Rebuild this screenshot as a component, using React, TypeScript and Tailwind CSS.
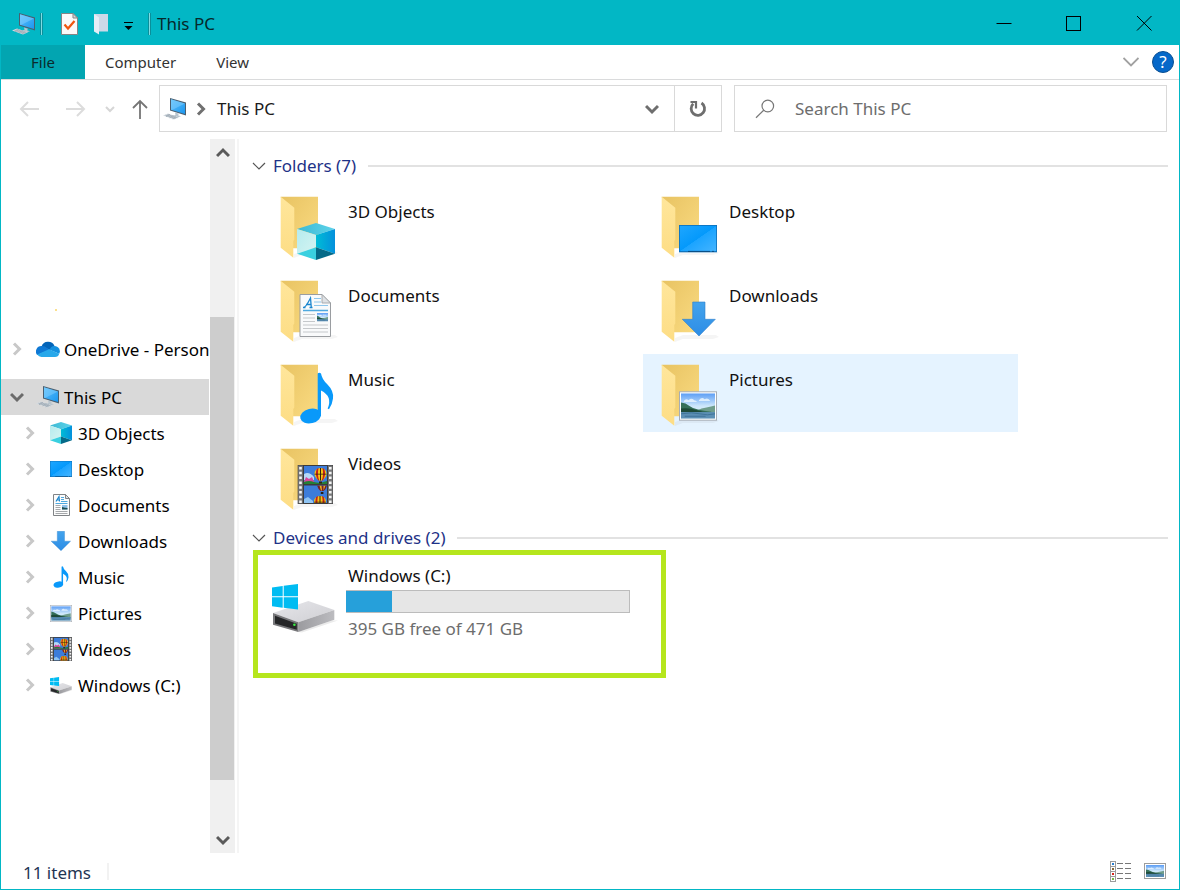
import type { ReactNode } from "react";

/* ---------- Shared gradients ---------- */

function Gradients() {
  return (
    <svg className="absolute size-0" aria-hidden="true">
      <defs>
        <linearGradient id="folderBack" x1="0" y1="0" x2="1" y2="1">
          <stop offset="0" stopColor="#e8c362" />
          <stop offset="1" stopColor="#fadb82" />
        </linearGradient>
        <linearGradient id="folderFlap" x1="0" y1="0" x2="0" y2="1">
          <stop offset="0" stopColor="#ffe69b" />
          <stop offset="1" stopColor="#fddd85" />
        </linearGradient>
        <linearGradient id="cubeTop" x1="0" y1="0" x2="1" y2="0">
          <stop offset="0" stopColor="#3cb9d3" />
          <stop offset="1" stopColor="#5dd3ea" />
        </linearGradient>
        <linearGradient id="cubeLeft" x1="0" y1="0" x2="1" y2="1">
          <stop offset="0" stopColor="#b5ebee" />
          <stop offset="1" stopColor="#d5f4f1" />
        </linearGradient>
        <linearGradient id="cubeRight" x1="0" y1="0" x2="1" y2="0">
          <stop offset="0" stopColor="#00bcd6" />
          <stop offset="1" stopColor="#0490dc" />
        </linearGradient>
        <linearGradient id="screen" x1="0" y1="0" x2="1" y2="1">
          <stop offset="0" stopColor="#1ea6ff" />
          <stop offset="0.5" stopColor="#0499fb" />
          <stop offset="0.51" stopColor="#1ba4ff" />
          <stop offset="1" stopColor="#44b4ff" />
        </linearGradient>
        <linearGradient id="arrow" x1="0" y1="0" x2="0" y2="1">
          <stop offset="0" stopColor="#43a3ec" />
          <stop offset="1" stopColor="#2d8de6" />
        </linearGradient>
        <linearGradient id="sky" x1="0" y1="0" x2="0" y2="1">
          <stop offset="0" stopColor="#5b9df5" />
          <stop offset="0.5" stopColor="#cde7fb" />
          <stop offset="1" stopColor="#e6f4fb" />
        </linearGradient>
        <linearGradient id="driveTop" x1="0" y1="0" x2="1" y2="1">
          <stop offset="0" stopColor="#e6e6ea" />
          <stop offset="1" stopColor="#cfcfd3" />
        </linearGradient>
        <linearGradient id="driveSide" x1="0" y1="0" x2="1" y2="0">
          <stop offset="0" stopColor="#9b9b9f" />
          <stop offset="1" stopColor="#bcbcc0" />
        </linearGradient>
        <linearGradient id="monitor" x1="0" y1="0" x2="1" y2="1">
          <stop offset="0" stopColor="#5cc0fb" />
          <stop offset="1" stopColor="#1c97f0" />
        </linearGradient>
      </defs>
    </svg>
  );
}

/* ---------- Artwork, drawn in a 64-unit folder box ---------- */

function CubeArt() {
  return (
    <g>
      <path d="M21 33 40 27 59 33 40 39Z" fill="url(#cubeTop)" />
      <path d="M21 33 40 39V51.3L21 57.7Z" fill="url(#cubeLeft)" />
      <path d="M59 33 40 39V51.3L59 57.7Z" fill="url(#cubeRight)" />
      <path d="M21 57.7 40 51.3V64Z" fill="#3ad0e0" />
      <path d="M59 57.7 40 51.3V64Z" fill="#056a88" />
    </g>
  );
}

function DesktopArt() {
  return (
    <g>
      <rect x="22" y="29" width="38" height="27.3" fill="#0d6fb8" />
      <rect x="22.8" y="29.8" width="36.4" height="25.3" fill="url(#screen)" />
      <path d="M31 55.4h22M55 55.4h2" stroke="#0a4c80" strokeWidth="1" />
    </g>
  );
}

function Landscape({ x, y, width, height }: { x: number; y: number; width: number; height: number }) {
  return (
    <svg x={x} y={y} width={width} height={height} viewBox="0 0 36 26" preserveAspectRatio="none">
      <rect width="36" height="26" fill="url(#sky)" />
      <path d="M3 8q2-3 5-1q3-3 6 0q2 0 3 2H3ZM19 7q3-4 6-1q4-2 6 2H19Z" fill="#eef7ff" opacity=".8" />
      <path d="M16 18q6-3 11-3.500q5-1 9-2v8H16Z" fill="#6f9d8c" />
      <path d="M0 9.500q5 .5 9 3.500t9 3.500q6 1.500 14 2.500v1H0Z" fill="#35705a" />
      <path d="M0 15.500q9-1 16 1.500t14 2.500H0Z" fill="#1e4a38" />
      <rect y="19.200" width="36" height="6.800" fill="#5c8fb4" />
      <path d="M0 21q12-2 20 0t16 0M4 23.500h22" stroke="#3f7398" strokeWidth="1" fill="none" />
    </svg>
  );
}

function DocumentArt() {
  return (
    <g>
      <path d="M24 14.500h22l8.500 8.500v33.500H24Z" fill="#f9fafb" stroke="#9a9da1" strokeWidth="1" />
      <path d="M46 14.500V23h8.500Z" fill="#dfe2e5" stroke="#9a9da1" strokeWidth=".8" />
      <path d="M27.500 27.500q2 .3 7-9.500l.8 9.500M30 24.500h5M27 27.500h2.500M33.500 27.500h3" stroke="#1b86cf" strokeWidth="1.300" fill="none" />
      <path d="M38 18.500h7M38 22h7M38 25.500h14" stroke="#8dc6ec" strokeWidth="1" />
      <path d="M27 30.500h25" stroke="#4fa9df" strokeWidth="1.500" />
      <path d="M27 34.500h12M27 38h12M27 41.500h12M27 45h25M27 48.500h25M27 52h25" stroke="#c5c8cb" strokeWidth="1" />
      <Landscape x={41} y={33} width={11} height={8.5} />
    </g>
  );
}

function SmallDocumentArt() {
  return (
    <g>
      <path d="M.500.500h12l4 4v17H.500Z" fill="#fcfcfc" stroke="#808386" />
      <path d="M12.500.500v4h4Z" fill="#dfe2e5" stroke="#808386" />
      <path d="M3 7.500 6 2.500l.5 5M4 6h2.500" stroke="#1b86cf" strokeWidth="1.200" fill="none" />
      <path d="M8 3.500h3M8 5.500h3M8 7.500h6.500M2.500 9.500h12" stroke="#4fa9df" strokeWidth="1" />
      <path d="M2.500 11.500h5M2.500 13.500h5M2.500 15.500h5M2.500 17.500h12M2.500 19.500h12" stroke="#a5a8ab" strokeWidth="1" />
      <rect x="9" y="11" width="5.500" height="4.500" fill="#8fc1ea" />
      <path d="M9 13l3 .8 2.500.2v1.500H9Z" fill="#1f4f52" />
    </g>
  );
}

function DownloadArt() {
  return <path d="M35.700 22H48v17.300h10.300L42 56 25.300 39.300h10.400Z" fill="url(#arrow)" stroke="#2f7fc9" strokeWidth=".6" />;
}

function MusicArt() {
  return (
    <g fill="#0999fa">
      <ellipse cx="34.700" cy="52" rx="10.600" ry="7.200" transform="rotate(-14 34.700 52)" />
      <path d="M41.700 9.500q1.500-1.500 3.300 0q1 6 6.500 11q6.500 6.500 5.500 14q-.8 6.500-4 10.800l-1.400-.8q5.400-12-6.600-18V52h-3.300Z" />
    </g>
  );
}

function PictureArt() {
  return (
    <g>
      <rect x="22.500" y="27.800" width="37" height="28.400" fill="#fff" stroke="#a6adb5" strokeWidth="1" />
      <Landscape x={24} y={29.3} width={34} height={25.4} />
    </g>
  );
}

function Balloon({ x, y }: { x: number; y: number }) {
  return (
    <g transform={`translate(${x} ${y})`}>
      <path d="M-6-1.500a6 5.500 0 0 1 12 0q0 4-4.500 7h-3Q-6 2.500-6-1.500Z" fill="#f7c312" />
      <path d="M-3.800-6Q-6 0-2.200 5.500h1Q-3.500 0-2-7ZM3.800-6Q6 0 2.200 5.500h-1Q3.500 0 2-7Z" fill="#c4211b" />
      <path d="M-.5-7h1v12.500h-1ZM-6-1.200h12v.8H-6Z" fill="#35200d" />
      <rect x="-1.500" y="6.500" width="3" height="2" fill="#33220f" />
    </g>
  );
}

function VideoArt() {
  return (
    <g>
      <rect x="21.700" y="17" width="35.300" height="39" fill="#3b3b3c" />
      <rect x="22.200" y="17.500" width="4.600" height="38" fill="#77787a" />
      <rect x="52" y="17.500" width="4.600" height="38" fill="#77787a" />
      <path d="M24.500 19v36M54.300 19v36" stroke="#f4f4f4" strokeWidth="2.600" strokeDasharray="2.500 2.300" />
      <svg x="28" y="18" width="23" height="18" viewBox="28 18 23 18">
        <rect x="28" y="18" width="23" height="18" fill="#3c7cda" />
        <path d="M28 26q5-3 10 3v3H28Z" fill="#b5d8f7" />
        <path d="M28 34l2-5 3 2 3-2 3 7H28Z" fill="#d8459a" />
        <path d="M28 34q5-2 10 0t13-1v3H28Z" fill="#247f35" />
        <Balloon x={44.5} y={27} />
      </svg>
      <svg x="28" y="37.500" width="23" height="17.500" viewBox="28 37.500 23 17.500">
        <rect x="28" y="37" width="23" height="18" fill="#3c7cda" />
        <path d="M28 51l4-2 5 4v2h-9Z" fill="#8fc4f3" />
        <path d="M41 37.500h10q-1 4-3.500 5.500h-3Q42 41 41 37.500Z" fill="#7a1f26" />
        <path d="M43.500 37.500h2l.5 5h-1ZM47.500 37.500h2l-2 5Z" fill="#e8b321" />
        <rect x="44.800" y="44" width="2.600" height="2" fill="#2a1c10" />
        <Balloon x={44} y={55} />
      </svg>
    </g>
  );
}

function FolderIcon({ children }: { children: ReactNode }) {
  return (
    <svg className="size-16 shrink-0 overflow-visible" viewBox="0 0 64 64" aria-hidden="true">
      <path d="M18 58l8-3h33l3 2-6 2H26l-8 3Z" fill="#000" opacity=".04" />
      <path d="M4.700.7H42v51.500H14Z" fill="url(#folderBack)" />
      <path d="M4.700.7 18.300 11.700V43.500l-1 1.500v16.700L4.700 51.700Z" fill="url(#folderFlap)" />
      {children}
    </svg>
  );
}

function DriveArt() {
  return (
    <g>
      <path d="M28 56 62 44.500l6 0-36 12Z" fill="#000" opacity=".08" />
      <path d="M3 37 38.300 25 64.300 34 28.300 46.300Z" fill="url(#driveTop)" />
      <path d="M28.300 46.300 64.300 34V43.700L28.300 56Z" fill="url(#driveSide)" />
      <path d="M3 37 28.300 46.300V56L3 48.700Z" fill="#77777a" />
      <path d="M5 39.800 26.800 47.800V53.800L5 47.500Z" fill="#252628" />
      <circle cx="24.400" cy="48.800" r="1.300" fill="#3bea45" />
      <path d="M2 11.400 12.700 10V20.300H2ZM13.700 9.800 28 8V20.300H13.700ZM2 21.300H12.700V31.700L2 30.300ZM13.700 21.300H28V33.500L13.700 31.800Z" fill="#00bcf2" />
    </g>
  );
}

/* ---------- Standalone icons ---------- */

function PcIcon() {
  return (
    <svg className="h-6 w-6 shrink-0" viewBox="0 0 24 24" aria-hidden="true">
      <path d="M7 1 23 5.500V18.500L7 13.500Z" fill="#4a5f70" />
      <path d="M8 2.300 22 6.400V17L8 12.800Z" fill="url(#monitor)" />
      <path d="M8 2.300 22 6.400 9 13 8 12.800Z" fill="#8fd4ff" opacity=".45" />
      <path d="M12 15.500l4 1.300-1 1.400 3 1-3 1-5-1.700 2.500-.6Z" fill="#b8c4cd" />
      <path d="M0 18.500 5 16.500 16 20.200 11 22.600Z" fill="#d3dae0" />
      <path d="M2.500 18.300l10 3.200M4.500 17.500l10 3.200M3 19.700l4-2.300M6.500 20.800l4-2.300M9.500 21.800l3.500-2" stroke="#8c99a4" strokeWidth=".6" />
    </svg>
  );
}

function CloudIcon() {
  return (
    <svg className="h-4 w-6" viewBox="0 0 24 16" aria-hidden="true">
      <path d="M5.500 5.500A7 7 0 0 1 18.500 5L14 9Z" fill="#0364b8" />
      <path d="M5.300 5A5.500 5.500 0 0 0 1.200 14L14 9 8.800 5.600A6 6 0 0 0 5.300 5Z" fill="#0f78d4" />
      <path d="M18.500 5a5.300 5.300 0 0 1 4.700 7.800L13.500 8.800l1.500-2.600A6 6 0 0 1 18.500 5Z" fill="#1490df" />
      <path d="M1.200 13.500 13 8.200l10.200 4.500A4.500 4.500 0 0 1 19 16H5.500a5.500 5.500 0 0 1-4.300-2.500Z" fill="#28a8ea" />
    </svg>
  );
}

function Chevron({ direction, className }: { direction: "right" | "down" | "up"; className: string }) {
  const paths = {
    right: "M4 1.500 9.500 7 4 12.500",
    down: "M1 4 7 10 13 4",
    up: "M1 10 7 4 13 10",
  };
  return (
    <svg className={`size-3.5 shrink-0 fill-none ${className}`} viewBox="0 0 14 14" aria-hidden="true">
      <path d={paths[direction]} stroke="currentColor" />
    </svg>
  );
}

/* ---------- Data ---------- */

type Place = { name: string; art: ReactNode; smallArt?: ReactNode; crop: string; size: string };

const places: Place[] = [
  { name: "3D Objects", art: <CubeArt />, crop: "21 27 38 37", size: "h-[22px] w-[22px]" },
  { name: "Desktop", art: <DesktopArt />, crop: "22 29 38 27.3", size: "h-4 w-[22px]" },
  { name: "Documents", art: <DocumentArt />, smallArt: <SmallDocumentArt />, crop: "0 0 17 22", size: "h-[22px] w-[17px]" },
  { name: "Downloads", art: <DownloadArt />, crop: "25 21.500 34 35", size: "h-5 w-5" },
  { name: "Music", art: <MusicArt />, crop: "23 8 35 52", size: "h-[22px] w-4" },
  { name: "Pictures", art: <PictureArt />, crop: "22 27.300 38 29.400", size: "h-[17px] w-[22px]" },
  { name: "Videos", art: <VideoArt />, crop: "21.700 17 35.300 39", size: "h-6 w-[22px]" },
];

const drive: Place = { name: "Windows (C:)", art: <DriveArt />, crop: "2 8 63 48", size: "h-[17px] w-[22px]" };

/* ---------- Page sections ---------- */

function TitleBar() {
  return (
    <header className="flex h-[45px] shrink-0 items-center bg-[#02b7c5] pt-[2px] pl-[11px]">
      <PcIcon />
      <span className="ml-1 h-[22px] w-[3px] border-x border-[#0a8f9a] bg-[#7fdbe2]" />
      <button aria-label="Properties" className="ml-[18px]">
        <svg className="h-[22px] w-[17px]" viewBox="0 0 17 22" aria-hidden="true">
          <path d="M.5.500h11.500l4.500 4.500v16.500H.5Z" fill="#fafafa" stroke="#858585" />
          <path d="M12 .500V5h4.500Z" fill="#d8d8d8" stroke="#858585" />
          <path d="M3.500 11.500 7 15.500 13.500 8" fill="none" stroke="#f0560f" strokeWidth="2.200" />
        </svg>
      </button>
      <button aria-label="New folder" className="ml-4">
        <svg className="h-[22px] w-[15px]" viewBox="0 0 15 22" aria-hidden="true">
          <path d="M0 1h14v17.500H4Z" fill="#ccd9e8" />
          <path d="M0 1 5 4.500V21.500L0 18.500Z" fill="#e6edf6" />
        </svg>
      </button>
      <button aria-label="Customize Quick Access Toolbar" className="mt-1 ml-[14px]">
        <svg className="h-2.5 w-[11px]" viewBox="0 0 11 10" aria-hidden="true">
          <path d="M1 1.500h9" stroke="#000" />
          <path d="M1.500 5h8L5.500 9Z" fill="#000" />
        </svg>
      </button>
      <span className="ml-[14px] h-[22px] w-[3px] border-x border-[#0a8f9a] bg-[#7fdbe2]" />
      <h1 className="ml-[6px] flex-1 text-[17px] leading-6 text-[#06282b]">This PC</h1>
      <button aria-label="Minimize" className="flex h-full w-[70px] items-center justify-center">
        <svg className="size-4" viewBox="0 0 16 16" aria-hidden="true">
          <path d="M.5 7.500h15" stroke="#000" />
        </svg>
      </button>
      <button aria-label="Maximize" className="flex h-full w-[70px] items-center justify-center">
        <svg className="size-4" viewBox="0 0 16 16" aria-hidden="true">
          <rect x=".5" y=".5" width="14" height="14" fill="none" stroke="#000" />
        </svg>
      </button>
      <button aria-label="Close" className="flex h-full w-[70px] items-center justify-center">
        <svg className="size-4" viewBox="0 0 16 16" aria-hidden="true">
          <path d="M1 0l14.500 14.500M15.500 0 1 14.500" stroke="#000" />
        </svg>
      </button>
    </header>
  );
}

function RibbonTabs() {
  return (
    <nav aria-label="Ribbon" className="flex h-[35px] shrink-0 items-stretch border-b border-[#dadbdc] text-[15px] text-[#333]">
      <button className="w-[84px] bg-[#02a5b1] text-[#0a2a2c]">File</button>
      <button className="ml-2 px-3">Computer</button>
      <button className="ml-4 px-3">View</button>
      <div className="ml-auto flex items-center pr-[5px]">
        <button aria-label="Expand the Ribbon" className="mr-[13px] text-[#a0a0a0]">
          <svg className="h-3 w-4 fill-none" viewBox="0 0 16 12" aria-hidden="true">
            <path d="M.5 2 8 9.500 15.500 2" stroke="currentColor" strokeWidth="1.800" />
          </svg>
        </button>
        <button aria-label="Help" className="flex size-[22px] items-center justify-center rounded-full border border-[#0a4f92] bg-[#0568c9] text-[17px] leading-5 text-white">
          ?
        </button>
      </div>
    </nav>
  );
}

function AddressRow() {
  return (
    <div className="flex shrink-0 items-center pt-[5px] pr-3 pb-[7px]">
      <div className="flex w-[158px] shrink-0 items-center pt-px pl-[18px]">
        <button aria-label="Back" className="text-[#dcdcdc]">
          <svg className="h-[18px] w-5 fill-none" viewBox="0 0 20 18" aria-hidden="true">
            <path d="M20 9H2M9 2 2 9l7 7" stroke="currentColor" strokeWidth="2" />
          </svg>
        </button>
        <button aria-label="Forward" className="ml-[27px] text-[#dcdcdc]">
          <svg className="h-[18px] w-5 fill-none" viewBox="0 0 20 18" aria-hidden="true">
            <path d="M0 9h18M11 2l7 7-7 7" stroke="currentColor" strokeWidth="2" />
          </svg>
        </button>
        <button aria-label="Recent locations" className="ml-[19px] text-[#d6d6d6]">
          <svg className="h-2 w-2.5 fill-none" viewBox="0 0 10 8" aria-hidden="true">
            <path d="M1 2l4 4 4-4" stroke="currentColor" strokeWidth="2" />
          </svg>
        </button>
        <button aria-label="Up" className="ml-[17px] text-[#757575]">
          <svg className="h-5 w-4 fill-none" viewBox="0 0 16 20" aria-hidden="true">
            <path d="M8 20V2M1 9l7-7 7 7" stroke="currentColor" strokeWidth="1.800" />
          </svg>
        </button>
      </div>
      <div className="grid min-w-0 flex-1 grid-cols-[563fr_433fr] gap-3">
        <div className="flex h-[47px] items-center border border-[#d9d9d9]">
          <a href="#this-pc" className="ml-[3px] flex items-center text-[17px] text-[#1b1b1b]">
            <PcIcon />
            <Chevron direction="right" className="mx-[7px] stroke-3 text-[#707070]" />
            <span className="ml-[2px]">This PC</span>
          </a>
          <button aria-label="Previous locations" className="mr-[15px] ml-auto text-[#6e6e6e]">
            <Chevron direction="down" className="stroke-3" />
          </button>
          <button aria-label="Refresh" className="flex h-full w-[47px] items-center justify-center border-l border-[#d9d9d9] text-[#6e6e6e]">
            <svg className="h-[18px] w-[18px] fill-none" viewBox="0 0 18 18" aria-hidden="true">
              <path d="M12.500 3a6.700 6.700 0 1 1-8.300.8" stroke="currentColor" strokeWidth="2.800" />
              <path d="M1.500 2H7V8.500" stroke="currentColor" strokeWidth="2.200" />
            </svg>
          </button>
        </div>
        <div className="flex h-[47px] items-center border border-[#d9d9d9] pl-5">
          <svg className="size-5 shrink-0 fill-none text-[#777]" viewBox="0 0 20 20" aria-hidden="true">
            <circle cx="12.800" cy="7" r="5.800" stroke="currentColor" strokeWidth="1.200" />
            <path d="M8.700 11.200 1 18.700" stroke="currentColor" strokeWidth="1.200" />
          </svg>
          <input
            type="text"
            aria-label="Search This PC"
            placeholder="Search This PC"
            className="ml-5 min-w-0 flex-1 bg-transparent text-[17px] text-[#333] outline-none placeholder:text-[#6d6d6d]"
          />
        </div>
      </div>
    </div>
  );
}

function TreeItem({ place }: { place: Place }) {
  return (
    <li>
      <a href="#place" className="flex h-9 items-center pl-[22px]">
        <Chevron direction="right" className="stroke-3 text-[#c8c8c8]" />
        <span className="mr-[5px] ml-3 flex w-6 shrink-0 items-center justify-center">
          <svg className={place.size} viewBox={place.crop} preserveAspectRatio="none" aria-hidden="true">
            {place.smallArt ?? place.art}
          </svg>
        </span>
        <span className="pt-px whitespace-nowrap">{place.name}</span>
      </a>
    </li>
  );
}

function Sidebar() {
  return (
    <aside className="flex w-[234px] shrink-0">
      <nav aria-label="Navigation pane" className="w-[209px] shrink-0 text-[17px] text-black">
        <div className="flex h-48 items-end pb-5 pl-[54px]">
          <span className="size-[2px] bg-[#fbe08e]" />
        </div>
        <a href="#onedrive" className="flex h-9 items-center pl-[9px]">
          <Chevron direction="right" className="stroke-3 text-[#c8c8c8]" />
          <span className="mr-1 ml-3">
            <CloudIcon />
          </span>
          <span className="pt-px whitespace-nowrap">OneDrive - Person</span>
        </a>
        <a href="#this-pc" className="mt-3 mr-px flex h-9 items-center bg-[#d9d9d9] pl-[9px]">
          <Chevron direction="down" className="stroke-3 text-[#6b6b6b]" />
          <span className="mr-1 ml-3">
            <PcIcon />
          </span>
          <span className="pt-px whitespace-nowrap">This PC</span>
        </a>
        <ul>
          {[...places, drive].map((place) => (
            <TreeItem key={place.name} place={place} />
          ))}
        </ul>
      </nav>
      <div className="flex w-[25px] shrink-0 flex-col items-center bg-[#f0f0f0]">
        <button aria-label="Scroll up" className="flex h-7 w-full items-center justify-center text-[#5a5a5a]">
          <Chevron direction="up" className="stroke-3" />
        </button>
        <div className="flex w-full flex-1 flex-col">
          <div className="flex-[150]" />
          <div className="mr-px flex-[463] bg-[#cdcdcd]" />
          <div className="flex-[47]" />
        </div>
        <button aria-label="Scroll down" className="flex h-[26px] w-full items-center justify-center text-[#5a5a5a]">
          <Chevron direction="down" className="stroke-3" />
        </button>
      </div>
    </aside>
  );
}

function GroupHeader({ title }: { title: string }) {
  return (
    <h2 className="flex h-6 items-center pr-[11px] text-[17px] leading-6 text-[#1e3287]">
      <button className="flex items-center whitespace-nowrap">
        <Chevron direction="down" className="mr-[7px] stroke-[1.2] text-[#555]" />
        {title}
      </button>
      <span className="ml-3 h-[2px] flex-1 bg-[#e2e2e2]" />
    </h2>
  );
}

function FolderTile({ place }: { place: Place }) {
  const hovered = place.name === "Pictures";
  return (
    <li>
      <a href="#folder" className={`flex h-[78px] gap-2 pt-[10px] pl-[14px] ${hovered ? "bg-[#e5f3ff]" : ""}`}>
        <FolderIcon>{place.art}</FolderIcon>
        <span className="mt-1 text-[17px] leading-6 text-[#111]">{place.name}</span>
      </a>
    </li>
  );
}

function Content() {
  return (
    <main className="min-w-0 flex-1 border-l-2 border-[#f5f5f5] pt-[15px]">
      <section className="pl-[13px]">
        <GroupHeader title="Folders (7)" />
        <ul className="mt-2 ml-[10px] grid grid-cols-[repeat(auto-fill,375px)] gap-[6px]">
          {places.map((place) => (
            <FolderTile key={place.name} place={place} />
          ))}
        </ul>
      </section>
      <section className="mt-[10px] pl-[13px]">
        <GroupHeader title="Devices and drives (2)" />
        <a href="#drive-c" className="ml-px flex h-32 w-[413px] border-[5px] border-[#b5e61d] pt-[9px] pl-3">
          <svg className="mt-3 h-16 w-[68px] shrink-0" viewBox="0 0 68 64" aria-hidden="true">
            <DriveArt />
          </svg>
          <span className="ml-2 flex w-[284px] flex-col">
            <span className="pl-[2px] text-[17px] leading-6 text-[#111]">Windows (C:)</span>
            <span
              role="progressbar"
              aria-label="Used space"
              aria-valuemin={0}
              aria-valuemax={471}
              aria-valuenow={76}
              className="mt-[2px] flex h-[23px] border border-l-0 border-[#bcbcbc] bg-[#e6e6e6]"
            >
              <span className="bg-[#26a0da]" style={{ width: `${(76 / 471) * 100}%` }} />
            </span>
            <span className="mt-1 pl-[2px] text-[17px] leading-6 text-[#6d6d6d]">395 GB free of 471 GB</span>
          </span>
        </a>
      </section>
    </main>
  );
}

function StatusBar() {
  const rows = [
    { y: 0.5, color: "#2b7fd0" },
    { y: 5.5, color: "#8a6a3a" },
    { y: 10.5, color: "#d8281f" },
    { y: 15.5, color: "#7ab648" },
  ];
  return (
    <footer className="flex h-9 shrink-0 items-center pr-[13px] pl-[22px]">
      <p className="pt-[3px] text-[17px] leading-6 text-[#1f3554]">11 items</p>
      <span className="ml-4 h-[17px] w-[2px] bg-[#f2f2f2]" />
      <button aria-label="Details view" className="ml-auto">
        <svg className="h-[21px] w-[21px]" viewBox="0 0 21 21" aria-hidden="true">
          {rows.map((row) => (
            <g key={row.y}>
              <rect x=".5" y={row.y} width="5" height="5" fill="#fff" stroke="#9c9c9c" />
              <rect x="2" y={row.y + 1.5} width="2" height="2" fill={row.color} />
              <path d={`M7 ${row.y + 2}h6M15 ${row.y + 2}h6`} stroke="#777" />
            </g>
          ))}
        </svg>
      </button>
      <button aria-label="Large icons view" className="ml-[13px]">
        <svg className="h-4 w-[22px]" viewBox="0 0 22 16" aria-hidden="true">
          <rect x=".5" y=".5" width="21" height="15" fill="#fff" stroke="#9c9c9c" />
          <Landscape x={2} y={2} width={18} height={12} />
        </svg>
      </button>
    </footer>
  );
}

export default function App() {
  return (
    <div className="relative flex min-h-screen flex-col border border-t-0 border-[#02b7c5] bg-white font-['Noto_Sans','Open_Sans',sans-serif]">
      <Gradients />
      <TitleBar />
      <RibbonTabs />
      <AddressRow />
      <div className="flex flex-1 gap-[2px]">
        <Sidebar />
        <Content />
      </div>
      <StatusBar />
    </div>
  );
}
